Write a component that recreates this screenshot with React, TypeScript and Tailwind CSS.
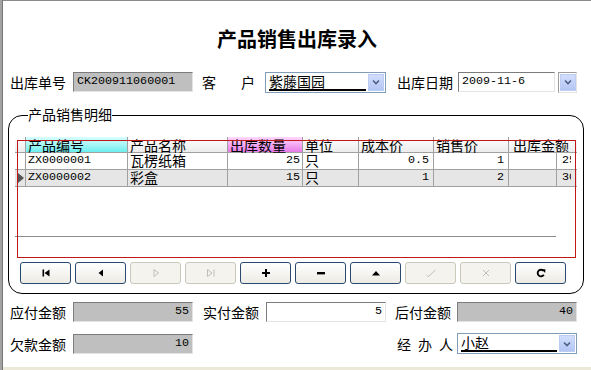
import React from 'react';

type Col = { w: string; title: string; head?: string };

const columns: Col[] = [
  { w: 'w-[102px]', title: '产品编号', head: 'bg-gradient-to-b from-[#d8ffff] to-[#6aeeee]' },
  { w: 'w-[100px]', title: '产品名称' },
  { w: 'w-[75px]', title: '出库数量', head: 'bg-gradient-to-b from-[#ffd8ff] to-[#e67ae6]' },
  { w: 'w-[56px]', title: '单位' },
  { w: 'w-[75px]', title: '成本价' },
  { w: 'w-[75px]', title: '销售价' },
];

const rows = [
  { code: 'ZX0000001', name: '瓦楞纸箱', qty: '25', unit: '只', cost: '0.5', price: '1', amount: '25' },
  { code: 'ZX0000002', name: '彩盒', qty: '15', unit: '只', cost: '1', price: '2', amount: '30' },
];

const mono = "font-['Liberation_Mono',monospace] text-[11.7px]";

function SunkenBox({ value, gray, right, w }: { value: string; gray?: boolean; right?: boolean; w: string }) {
  return (
    <div
      className={`${w} h-[20px] flex items-center px-[3px] border border-t-[#7c7c7c] border-l-[#7c7c7c] border-b-[#e4e4e4] border-r-[#e4e4e4] ${
        gray ? 'bg-[#bfbfbf]' : 'bg-white'
      } ${right ? 'justify-end' : ''}`}
    >
      <span className={mono}>{value}</span>
    </div>
  );
}

function DropArrow() {
  return (
    <div className="w-[16px] h-full shrink-0 bg-gradient-to-b from-[#d2defd] to-[#b2c6f4] border border-[#bcccf2] flex items-center justify-center">
      <svg width="8" height="6" viewBox="0 0 8 6">
        <path d="M1 1.5 L4 4.5 L7 1.5" fill="none" stroke="#4d6185" strokeWidth="1.6" />
      </svg>
    </div>
  );
}

function Combo({ text, w }: { text: string; w: string }) {
  return (
    <div className={`${w} h-[21px] flex bg-white border border-[#7f9db9] p-[1px]`}>
      <div className="flex-1 pl-[2px] pr-[2px]">
        <div className="h-[17px] border-b-2 border-black flex items-end pb-[1px] underline underline-offset-2">{text}</div>
      </div>
      <DropArrow />
    </div>
  );
}

function NavButton({ disabled, children }: { disabled?: boolean; children: React.ReactNode }) {
  return (
    <div
      className={`w-[51px] h-[22px] rounded-[3px] border flex items-center justify-center ${
        disabled
          ? 'border-[#cac8bb] bg-[#f4f3ee]'
          : 'border-[#294a6e] bg-gradient-to-b from-white to-[#ecebe4]'
      }`}
    >
      {children}
    </div>
  );
}

const dis = '#b9b9b3';
const cell = 'shrink-0 border-r border-[#a0a0a0] flex items-center';

export default function App() {
  return (
    <div className="w-[591px] h-[370px] flex bg-white overflow-hidden text-[14px] leading-none text-black font-['Noto_Sans_CJK_SC',sans-serif]">
      <div className="w-[3px] h-full bg-[#a3a3a3] border-r border-[#767676]" />
      <div className="flex-1 flex flex-col border-t border-[#8a8a8a] border-b-[3px] border-b-[#ece9d8]">
        {/* Title */}
        <div className="h-[70px] pt-[6px] flex items-center justify-center">
          <h1 className="text-[20px] font-bold">产品销售出库录入</h1>
        </div>

        {/* Header fields */}
        <div className="h-[22px] flex items-center">
          <span className="ml-[7px] w-[56px]">出库单号</span>
          <div className="ml-[7px]">
            <SunkenBox value="CK200911060001" gray w="w-[120px]" />
          </div>
          <span className="ml-[9px]">客</span>
          <span className="ml-[25px]">户</span>
          <div className="ml-[10px]">
            <Combo text="紫藤国园" w="w-[121px]" />
          </div>
          <span className="ml-[11px] w-[56px]">出库日期</span>
          <div className="ml-[5px]">
            <SunkenBox value="2009-11-6" w="w-[97px]" />
          </div>
          <div className="ml-[3px] w-[19px] h-[21px] border border-t-[#9c9c9c] border-l-[#9c9c9c] border-b-[#e4e4e4] border-r-[#e4e4e4] p-[1px]">
            <DropArrow />
          </div>
        </div>

        {/* Group box */}
        <div className="relative mt-[22px] ml-[5px] w-[576px] h-[179px] border border-black rounded-[14px]">
          <span className="absolute left-[19px] top-[-9px] bg-white">产品销售明细</span>

          {/* Grid */}
          <div className="relative mt-[21px] ml-[6px] w-[562px] h-[121px] overflow-hidden bg-white">
            <div className="flex h-[16px] border-b border-[#a0a0a0] bg-gradient-to-b from-white to-[#ececec]">
              <div className="w-[11px] shrink-0 border-r border-[#a0a0a0]" />
              {columns.map((c) => (
                <div key={c.title} className={`${c.w} shrink-0 border-r border-[#a0a0a0] pl-[2px] pt-[1px] ${c.head ?? ''}`}>
                  {c.title}
                </div>
              ))}
              <div className="flex-1 pl-[4px] pt-[1px] whitespace-nowrap overflow-hidden">出库金额</div>
            </div>
            {rows.map((r, i) => (
              <div key={r.code} className={`flex h-[17px] border-b border-[#a0a0a0] ${i === 1 ? 'bg-[#e6e6e6]' : 'bg-white'}`}>
                <div className={`w-[11px] justify-end pr-[1px] ${cell}`}>
                  {i === 1 && (
                    <svg width="6" height="10" viewBox="0 0 6 10">
                      <path d="M0 0 L6 5 L0 10 Z" fill="#555" />
                    </svg>
                  )}
                </div>
                <div className={`w-[102px] pl-[2px] ${cell} ${mono}`}>{r.code}</div>
                <div className={`w-[100px] pl-[2px] pb-[3px] ${cell}`}>{r.name}</div>
                <div className={`w-[75px] pr-[2px] justify-end ${cell} ${mono}`}>{r.qty}</div>
                <div className={`w-[56px] pl-[2px] pb-[3px] ${cell}`}>{r.unit}</div>
                <div className={`w-[75px] pr-[4px] justify-end ${cell} ${mono}`}>{r.cost}</div>
                <div className={`w-[75px] pr-[4px] justify-end ${cell} ${mono}`}>{r.price}</div>
                <div className={`w-[48px] ${cell}`} />
                <div className={`w-[14px] shrink-0 pl-[5px] flex items-center overflow-hidden ${mono}`}>{r.amount}</div>
              </div>
            ))}
            <div className="mt-[49px] w-[541px] h-px bg-[#8c8c8c]" />
            <div className="absolute left-[2px] top-[3px] right-[1px] bottom-0 border border-[#c01818]" />
          </div>

          {/* Navigator */}
          <div className="mt-[4px] ml-[11px] flex gap-[4px]">
            <NavButton>
              <svg width="10" height="10" viewBox="0 0 10 10">
                <rect x="1.5" y="1.5" width="1.6" height="7" fill="#000" />
                <path d="M8.5 1.5 V8.5 L3.5 5 Z" fill="#000" />
              </svg>
            </NavButton>
            <NavButton>
              <svg width="10" height="10" viewBox="0 0 10 10">
                <path d="M7 1.5 V8.5 L2.5 5 Z" fill="#000" />
              </svg>
            </NavButton>
            <NavButton disabled>
              <svg width="10" height="10" viewBox="0 0 10 10">
                <path d="M3 1.5 V8.5 L7.5 5 Z" fill="none" stroke={dis} strokeWidth="0.9" />
              </svg>
            </NavButton>
            <NavButton disabled>
              <svg width="10" height="10" viewBox="0 0 10 10">
                <path d="M1.5 1.5 V8.5 L6 5 Z" fill="none" stroke={dis} strokeWidth="0.9" />
                <path d="M8 1.5 V8.5" stroke={dis} strokeWidth="0.9" />
              </svg>
            </NavButton>
            <NavButton>
              <svg width="10" height="10" viewBox="0 0 10 10">
                <path d="M4 1 H6 V4 H9 V6 H6 V9 H4 V6 H1 V4 H4 Z" fill="#000" />
              </svg>
            </NavButton>
            <NavButton>
              <svg width="10" height="10" viewBox="0 0 10 10">
                <rect x="1" y="4" width="8" height="2.4" fill="#000" />
              </svg>
            </NavButton>
            <NavButton>
              <svg width="10" height="10" viewBox="0 0 10 10">
                <path d="M1 7.5 H9 L5 3 Z" fill="#000" />
              </svg>
            </NavButton>
            <NavButton disabled>
              <svg width="12" height="10" viewBox="0 0 12 10">
                <path d="M1.5 7 L3.5 8.5 L10.5 2" fill="none" stroke={dis} strokeWidth="0.9" />
              </svg>
            </NavButton>
            <NavButton disabled>
              <svg width="10" height="10" viewBox="0 0 10 10">
                <path d="M2 2 L8 8 M8 2 L2 8" fill="none" stroke={dis} strokeWidth="0.9" />
              </svg>
            </NavButton>
            <NavButton>
              <svg width="10" height="10" viewBox="0 0 10 10">
                <path d="M7.6 3 A3.3 3.3 0 1 0 7.8 6.8" fill="none" stroke="#000" strokeWidth="1.9" />
                <path d="M5.6 1.2 L9.4 1.2 L9.2 5 Z" fill="#000" />
              </svg>
            </NavButton>
          </div>
        </div>

        {/* Totals row 1 */}
        <div className="mt-[8px] h-[20px] flex items-center">
          <span className="ml-[7px] w-[56px]">应付金额</span>
          <div className="ml-[7px]">
            <SunkenBox value="55" gray right w="w-[120px]" />
          </div>
          <span className="ml-[10px] w-[56px]">实付金额</span>
          <div className="ml-[7px]">
            <SunkenBox value="5" right w="w-[120px]" />
          </div>
          <span className="ml-[9px] w-[56px]">后付金额</span>
          <div className="ml-[6px]">
            <SunkenBox value="40" gray right w="w-[120px]" />
          </div>
        </div>

        {/* Totals row 2 */}
        <div className="mt-[11px] h-[21px] flex items-center">
          <span className="ml-[7px] w-[56px]">欠款金额</span>
          <div className="ml-[7px]">
            <SunkenBox value="10" gray right w="w-[120px]" />
          </div>
          <div className="ml-[204px] w-[56px] flex gap-[7px]">
            <span>经</span>
            <span>办</span>
            <span>人</span>
          </div>
          <div className="ml-[4px]">
            <Combo text="小赵" w="w-[120px]" />
          </div>
        </div>
      </div>
    </div>
  );
}
